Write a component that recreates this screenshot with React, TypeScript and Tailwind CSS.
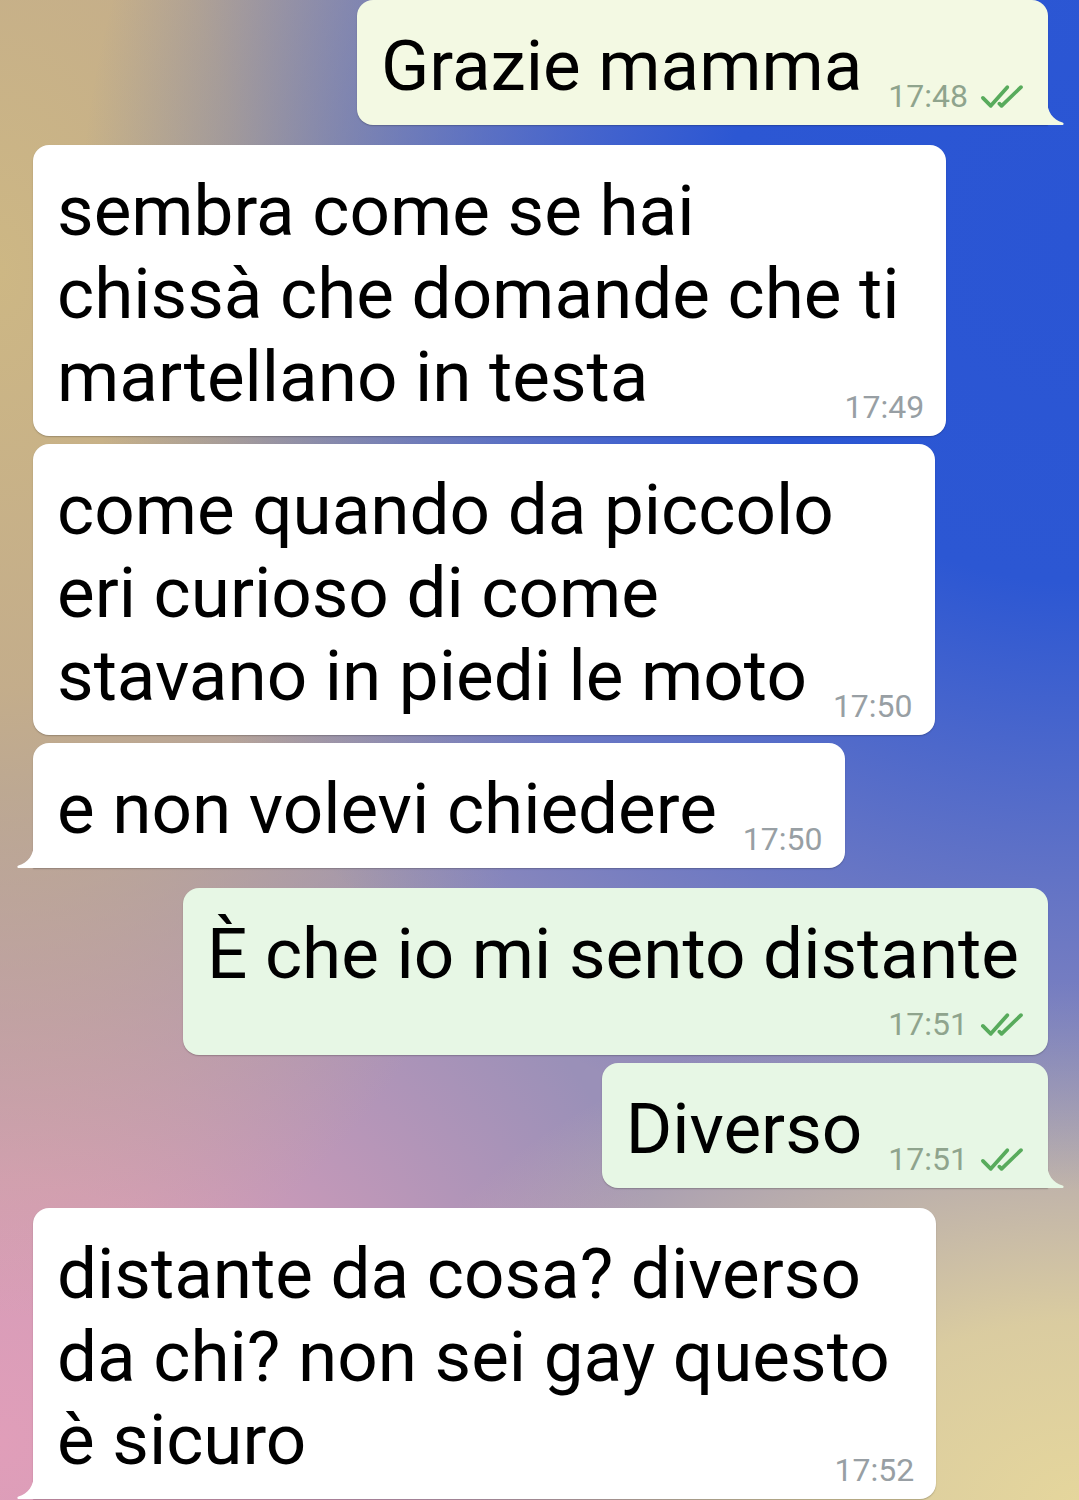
import React from 'react';

interface Message {
  id: number;
  out: boolean;
  lines: string[];
  time: string;
  inlineTime: boolean;
  tail: boolean;
  groupStart: boolean;
  bg: string;
}

const messages: Message[] = [
  { id: 1, out: true, lines: ['Grazie mamma'], time: '17:48', inlineTime: true, tail: true, groupStart: true, bg: 'bg-[#f3f9e3]' },
  {
    id: 2,
    out: false,
    lines: ['sembra come se hai ', 'chissà che domande che ti ', 'martellano in testa'],
    time: '17:49',
    inlineTime: true,
    tail: false,
    groupStart: true,
    bg: 'bg-white',
  },
  {
    id: 3,
    out: false,
    lines: ['come quando da piccolo ', 'eri curioso di come ', 'stavano in piedi le moto'],
    time: '17:50',
    inlineTime: true,
    tail: false,
    groupStart: false,
    bg: 'bg-white',
  },
  { id: 4, out: false, lines: ['e non volevi chiedere'], time: '17:50', inlineTime: true, tail: true, groupStart: false, bg: 'bg-white' },
  { id: 5, out: true, lines: ['È che io mi sento distante'], time: '17:51', inlineTime: false, tail: false, groupStart: true, bg: 'bg-[#e7f7e5]' },
  { id: 6, out: true, lines: ['Diverso'], time: '17:51', inlineTime: true, tail: true, groupStart: false, bg: 'bg-[#e7f7e5]' },
  {
    id: 7,
    out: false,
    lines: ['distante da cosa? diverso ', 'da chi? non sei gay questo ', 'è sicuro'],
    time: '17:52',
    inlineTime: true,
    tail: true,
    groupStart: true,
    bg: 'bg-white',
  },
];

function DoubleCheck() {
  return (
    <svg width="46" height="25" viewBox="0 0 32 17" fill="none" stroke="#58ab5c" strokeWidth={2.6} strokeLinecap="round" strokeLinejoin="round">
      <path d="M2 9.5 L7.5 15 L19 2" />
      <path d="M13.5 13.5 L15 15 L28.5 2" />
    </svg>
  );
}

function Time({ msg }: { msg: Message }) {
  return (
    <span
      className={`-mr-[7px] flex shrink-0 items-center gap-[12px] whitespace-nowrap text-[32px] leading-[38px] ${
        msg.out ? 'text-[#8fa48d]' : 'text-[#989fa4]'
      }`}
    >
      {msg.time}
      {msg.out && <DoubleCheck />}
    </span>
  );
}

function Tail({ out, fill }: { out: boolean; fill: string }) {
  return (
    <svg
      className={`absolute bottom-0 h-[26px] w-[18px] ${out ? '-right-[16px] -scale-x-100' : '-left-[16px]'}`}
      viewBox="0 0 18 26"
    >
      <path d="M18 0 L17 0 C17 13 11 21 1.5 23.4 C0 23.8 0 26 2 26 L18 26 Z" fill={fill} />
    </svg>
  );
}

function Bubble({ msg }: { msg: Message }) {
  const last = msg.lines.length - 1;
  const fill = msg.bg === 'bg-white' ? '#ffffff' : msg.bg === 'bg-[#f3f9e3]' ? '#f3f9e3' : '#e7f7e5';
  const corner = msg.tail ? (msg.out ? 'rounded-br-none' : 'rounded-bl-none') : '';

  return (
    <div
      className={`relative ${msg.out ? 'self-end' : 'self-start'} ${msg.groupStart ? 'mt-[20px] first:mt-0' : 'mt-[8px]'}`}
    >
      <div
        className={`relative rounded-[16px] ${corner} ${msg.bg} pt-[24px] pb-[10px] pl-[24px] pr-[29px] shadow-[0_1px_1.5px_rgba(0,0,0,0.22)]`}
      >
        {msg.lines.map((line, i) =>
          i === last && msg.inlineTime ? (
            <div key={i} className="flex items-end justify-between">
              <span className="mb-[8px] whitespace-pre leading-[83px]">{line}</span>
              <span className="ml-[26px]">
                <Time msg={msg} />
              </span>
            </div>
          ) : (
            <div key={i} className="whitespace-pre leading-[83px]">
              {line}
            </div>
          )
        )}
        {!msg.inlineTime && (
          <div className="mt-[10px] mb-[2px] flex justify-end">
            <Time msg={msg} />
          </div>
        )}
      </div>
      {msg.tail && <Tail out={msg.out} fill={fill} />}
    </div>
  );
}

export default function App() {
  return (
    <div className="min-h-[1500px] w-full overflow-hidden bg-[#9a90b8] [background-image:radial-gradient(1000px_950px_at_100%_16%,#2a55d4_0%,#2c57d3_36%,rgba(44,87,211,0)_100%),radial-gradient(620px_1050px_at_0%_18%,#cdb784_0%,rgba(200,176,134,0.9)_40%,rgba(200,176,134,0)_100%),radial-gradient(700px_650px_at_0%_96%,#e09eb9_0%,rgba(222,158,184,0.85)_40%,rgba(222,158,184,0)_100%),radial-gradient(760px_520px_at_100%_100%,#e5d69c_0%,rgba(229,214,156,0.85)_35%,rgba(229,214,156,0)_100%)] font-[Roboto,sans-serif] text-[71px] text-black">
      <div className="flex flex-col pl-[33px] pr-[31px] pb-[3px]">
        {messages.map((m) => (
          <Bubble key={m.id} msg={m} />
        ))}
      </div>
    </div>
  );
}
